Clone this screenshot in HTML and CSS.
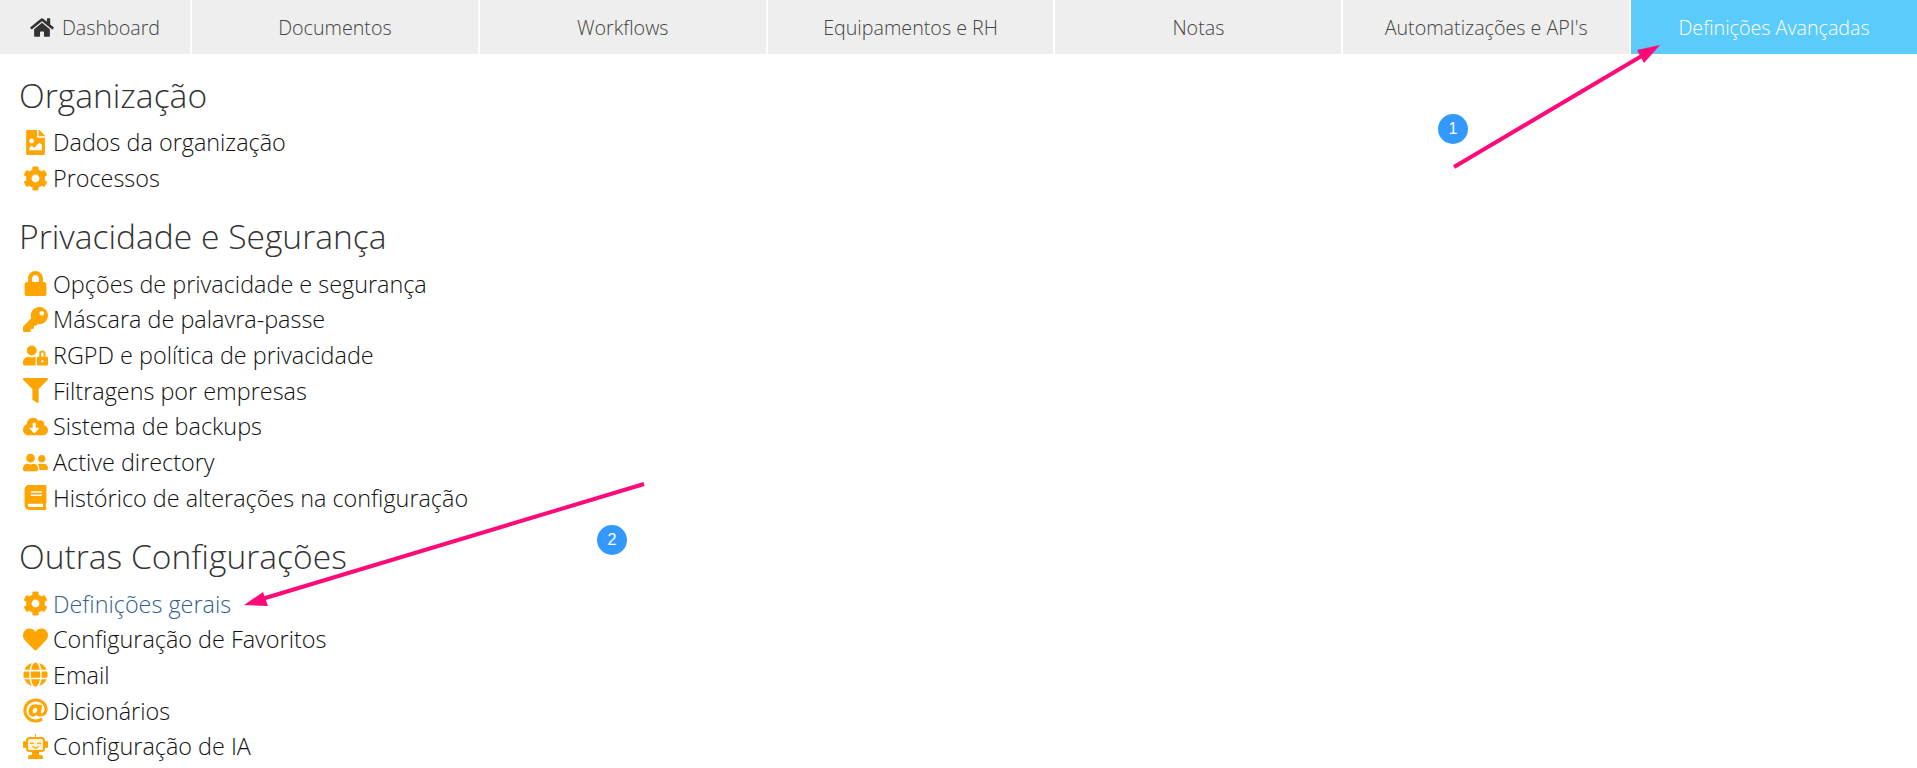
FILE: index.html
```html
<!DOCTYPE html>
<html lang="pt">
  <head>
    <meta charset="UTF-8" />
    <title>Definições Avançadas</title>
    <link rel="stylesheet" href="styles.css">
  </head>
  <body>
    <nav class="tabs">
      <a class="tab tab-home">
        <svg class="home-icon" viewBox="0 0 576 512"><path d="M280.37 148.26L96 300.11V464a16 16 0 0 0 16 16l112.06-.29a16 16 0 0 0 15.92-16V368a16 16 0 0 1 16-16h64a16 16 0 0 1 16 16v95.64a16 16 0 0 0 16 16.05L464 480a16 16 0 0 0 16-16V300L295.67 148.26a12.19 12.19 0 0 0-15.3 0zM571.6 251.47L488 182.56V44.05a12 12 0 0 0-12-12h-56a12 12 0 0 0-12 12v72.61L318.47 43a48 48 0 0 0-61 0L4.34 251.47a12 12 0 0 0-1.6 16.9l25.5 31A12 12 0 0 0 45.15 301l235.22-193.74a12.19 12.19 0 0 1 15.3 0L530.9 301a12 12 0 0 0 16.9-1.6l25.5-31a12 12 0 0 0-1.7-16.93z"/></svg>
        Dashboard
      </a>
      <a class="tab">Documentos</a>
      <a class="tab">Workflows</a>
      <a class="tab">Equipamentos e RH</a>
      <a class="tab">Notas</a>
      <a class="tab">Automatizações e API's</a>
      <a class="tab active">Definições Avançadas</a>
    </nav>

    <main class="content">
      <h2>Organização</h2>
      <ul class="links">
        <li><svg class="icon" viewBox="0 0 384 512"><path d="M384 121.941V128H256V0h6.059a24 24 0 0 1 16.97 7.029l97.941 97.941a24.002 24.002 0 0 1 7.03 16.971zM248 160c-13.2 0-24-10.8-24-24V0H24C10.745 0 0 10.745 0 24v464c0 13.255 10.745 24 24 24h336c13.255 0 24-10.745 24-24V160H248zm-135.455 16c26.51 0 48 21.49 48 48s-21.49 48-48 48-48-21.49-48-48 21.491-48 48-48zm208 240h-256l.485-48.485L104.545 328c4.686-4.686 11.799-4.201 16.485.485L160.545 368 264.06 264.485c4.686-4.686 12.284-4.686 16.971 0L320.545 304v112z"/></svg>Dados da organização</li>
        <li><svg class="icon" viewBox="0 0 512 512"><path id="cog" d="M487.4 315.7l-42.6-24.6c4.3-23.2 4.3-47 0-70.2l42.6-24.6c4.9-2.8 7.1-8.6 5.5-14-11.1-35.6-30-67.8-54.7-94.6-3.8-4.1-10-5.1-14.8-2.3L380.8 110c-17.9-15.4-38.5-27.3-60.8-35.1V25.8c0-5.6-3.9-10.5-9.4-11.7-36.7-8.2-74.3-7.8-109.2 0-5.5 1.2-9.4 6.1-9.4 11.7V75c-22.2 7.9-42.8 19.8-60.8 35.1L88.7 85.5c-4.9-2.8-11-1.9-14.8 2.3-24.7 26.7-43.6 58.9-54.7 94.6-1.7 5.4.6 11.2 5.5 14L67.3 221c-4.3 23.2-4.3 47 0 70.2l-42.6 24.6c-4.9 2.8-7.1 8.6-5.5 14 11.1 35.6 30 67.8 54.7 94.6 3.8 4.1 10 5.1 14.8 2.3l42.6-24.6c17.9 15.4 38.5 27.3 60.8 35.1v49.2c0 5.6 3.9 10.5 9.4 11.7 36.7 8.2 74.3 7.8 109.2 0 5.5-1.2 9.4-6.1 9.4-11.7v-49.2c22.2-7.9 42.8-19.8 60.8-35.1l42.6 24.6c4.9 2.8 11 1.9 14.8-2.3 24.7-26.7 43.6-58.9 54.7-94.6 1.5-5.5-.7-11.3-5.6-14.1zM256 336c-44.1 0-80-35.9-80-80s35.9-80 80-80 80 35.9 80 80-35.9 80-80 80z"/></svg>Processos</li>
      </ul>

      <h2>Privacidade e Segurança</h2>
      <ul class="links">
        <li><svg class="icon" viewBox="0 0 448 512"><path d="M400 224h-24v-72C376 68.2 307.8 0 224 0S72 68.2 72 152v72H48c-26.5 0-48 21.5-48 48v192c0 26.5 21.5 48 48 48h352c26.5 0 48-21.5 48-48V272c0-26.5-21.5-48-48-48zm-104 0H152v-72c0-39.7 32.3-72 72-72s72 32.3 72 72v72z"/></svg>Opções de privacidade e segurança</li>
        <li><svg class="icon" viewBox="0 0 512 512"><path d="M512 176.001C512 273.203 433.202 352 336 352c-11.22 0-22.19-1.062-32.827-3.069l-24.012 27.014A23.999 23.999 0 0 1 261.223 384H224v40c0 13.255-10.745 24-24 24h-40v40c0 13.255-10.745 24-24 24H24c-13.255 0-24-10.745-24-24v-78.059c0-6.365 2.529-12.47 7.029-16.971l161.802-161.802C163.108 213.814 160 195.271 160 176 160 78.798 238.797.001 335.999 0 433.488-.001 512 78.511 512 176.001zM336 128c0 26.51 21.49 48 48 48s48-21.49 48-48-21.49-48-48-48-48 21.49-48 48z"/></svg>Máscara de palavra-passe</li>
        <li><svg class="icon" viewBox="0 0 640 512"><path d="M224 256A128 128 0 1 0 96 128a128 128 0 0 0 128 128zm96 64a63.08 63.08 0 0 1 8.1-30.5c-4.8-.5-9.5-1.5-14.5-1.5h-16.7a174.08 174.08 0 0 1-145.8 0h-16.7A134.43 134.43 0 0 0 0 422.4V464a48 48 0 0 0 48 48h280.9a63.54 63.54 0 0 1-8.9-32zm288-32h-32v-80a80 80 0 0 0-160 0v80h-32a32 32 0 0 0-32 32v160a32 32 0 0 0 32 32h224a32 32 0 0 0 32-32V320a32 32 0 0 0-32-32zM496 432a32 32 0 1 1 32-32 32 32 0 0 1-32 32zm32-144h-64v-80a32 32 0 0 1 64 0z"/></svg>RGPD e política de privacidade</li>
        <li><svg class="icon" viewBox="0 0 512 512"><path d="M487.976 0H24.028C2.71 0-8.047 25.866 7.058 40.971L192 225.941V432c0 7.831 3.821 15.17 10.237 19.662l80 55.98C298.02 518.69 320 507.493 320 487.98V225.941l184.947-184.97C520.021 25.896 509.338 0 487.976 0z"/></svg>Filtragens por empresas</li>
        <li><svg class="icon" viewBox="0 0 640 512"><path d="M537.6 226.6c4.1-10.7 6.4-22.4 6.4-34.6 0-53-43-96-96-96-19.7 0-38.1 6-53.3 16.2C367 64.2 315.3 32 256 32c-88.4 0-160 71.6-160 160 0 2.7.1 5.4.2 8.1C40.2 219.8 0 273.2 0 336c0 79.5 64.5 144 144 144h368c70.7 0 128-57.3 128-128 0-61.9-44-113.6-102.4-125.4zm-132.9 88.7L299.3 420.7c-6.2 6.2-16.4 6.2-22.6 0L171.3 315.3c-10.1-10.1-2.9-27.3 11.3-27.3H248V176c0-8.8 7.2-16 16-16h48c8.8 0 16 7.2 16 16v112h65.4c14.2 0 21.4 17.2 11.3 27.3z"/></svg>Sistema de backups</li>
        <li><svg class="icon" viewBox="0 0 640 512"><path d="M192 256c61.9 0 112-50.1 112-112S253.9 32 192 32 80 82.1 80 144s50.1 112 112 112zm76.8 32h-8.3c-20.8 10-43.9 16-68.5 16s-47.6-6-68.5-16h-8.3C51.6 288 0 339.6 0 403.2V432c0 26.5 21.5 48 48 48h288c26.5 0 48-21.5 48-48v-28.8c0-63.6-51.6-115.2-115.2-115.2zM480 256c53 0 96-43 96-96s-43-96-96-96-96 43-96 96 43 96 96 96zm48 32h-3.8c-13.9 4.8-28.6 8-44.2 8s-30.3-3.2-44.2-8H432c-20.4 0-39.2 5.9-55.7 15.4 24.4 26.3 39.7 61.2 39.7 99.8v38.4c0 2.2-.5 4.3-.6 6.4H592c26.5 0 48-21.5 48-48 0-61.9-50.1-112-112-112z"/></svg>Active directory</li>
        <li><svg class="icon" viewBox="0 0 448 512"><path d="M448 360V24c0-13.3-10.7-24-24-24H96C43 0 0 43 0 96v320c0 53 43 96 96 96h328c13.3 0 24-10.7 24-24v-16c0-7.5-3.5-14.3-8.9-18.7-4.2-15.4-4.2-59.3 0-74.7 5.4-4.3 8.9-11.1 8.9-18.6zM128 134c0-3.3 2.7-6 6-6h212c3.3 0 6 2.7 6 6v20c0 3.3-2.7 6-6 6H134c-3.3 0-6-2.7-6-6v-20zm0 64c0-3.3 2.7-6 6-6h212c3.3 0 6 2.7 6 6v20c0 3.3-2.7 6-6 6H134c-3.3 0-6-2.7-6-6v-20zm253.4 250H96c-17.7 0-32-14.3-32-32 0-17.6 14.4-32 32-32h285.4c-1.9 17.1-1.9 46.9 0 64z"/></svg>Histórico de alterações na configuração</li>
      </ul>

      <h2>Outras Configurações</h2>
      <ul class="links">
        <li class="current"><svg class="icon" viewBox="0 0 512 512"><use href="#cog"/></svg>Definições gerais</li>
        <li><svg class="icon" viewBox="0 0 512 512"><path d="M462.3 62.6C407.5 15.9 326 24.3 275.7 76.2L256 96.5l-19.7-20.3C186.1 24.3 104.5 15.9 49.7 62.6c-62.8 53.6-66.1 149.8-9.9 207.9l193.5 199.8c12.5 12.9 32.8 12.9 45.3 0l193.5-199.8c56.3-58.1 53-154.3-9.8-207.9z"/></svg>Configuração de Favoritos</li>
        <li><svg class="icon" viewBox="0 0 496 512"><path d="M336.5 160C322 70.7 287.8 8 248 8s-74 62.7-88.5 152h177zM152 256c0 22.2 1.2 43.5 3.3 64h185.3c2.1-20.5 3.3-41.8 3.3-64s-1.2-43.5-3.3-64H155.3c-2.1 20.5-3.3 41.8-3.3 64zm324.7-96c-28.6-67.9-86.5-120.4-158-141.6 24.4 33.8 41.2 84.7 50 141.6h108zM177.2 18.4C105.8 39.6 47.8 92.1 19.3 160h108c8.7-56.9 25.5-107.8 49.9-141.6zM487.4 192H372.7c2.1 21 3.3 42.5 3.3 64s-1.2 43-3.3 64h114.6c5.5-20.5 8.6-41.8 8.6-64s-3.1-43.5-8.5-64zM120 256c0-21.5 1.2-43 3.3-64H8.6C3.2 212.5 0 233.8 0 256s3.2 43.5 8.6 64h114.6c-2-21-3.2-42.5-3.2-64zm39.5 96c14.5 89.3 48.7 152 88.5 152s74-62.7 88.5-152h-177zm159.3 141.6c71.4-21.2 129.4-73.7 158-141.6h-108c-8.8 56.9-25.6 107.8-50 141.6zM19.3 352c28.6 67.9 86.5 120.4 158 141.6-24.4-33.8-41.2-84.7-50-141.6h-108z"/></svg>Email</li>
        <li><svg class="icon" viewBox="0 0 512 512"><path d="M256 8C118.941 8 8 118.919 8 256c0 137.059 110.919 248 248 248 48.154 0 95.342-14.14 135.408-40.223 12.005-7.815 14.625-24.288 5.552-35.372l-10.177-12.433c-7.671-9.371-21.179-11.667-31.373-5.129C325.92 429.757 291.314 440 256 440c-101.458 0-184-82.542-184-184S154.542 72 256 72c100.139 0 184 57.619 184 160 0 38.786-21.093 79.742-58.17 83.693-17.349-.454-16.91-12.857-13.476-30.024l23.433-121.11C394.653 149.75 383.308 136 368.225 136h-44.981a13.518 13.518 0 0 0-13.432 11.993l-.01.092c-14.697-17.901-40.448-21.775-59.971-21.775-74.58 0-137.831 62.234-137.831 151.46 0 65.303 36.785 105.87 96 105.87 26.984 0 57.369-15.637 74.991-38.333 9.522 34.104 40.613 34.103 70.71 34.103C462.609 379.41 504 307.798 504 232 504 95.653 394.023 8 256 8zm-21.68 304.43c-22.249 0-36.07-15.623-36.07-40.771 0-44.993 30.779-72.729 58.63-72.729 22.292 0 35.601 15.241 35.601 40.77 0 45.061-33.875 72.73-58.161 72.73z"/></svg>Dicionários</li>
        <li><svg class="icon" viewBox="0 0 25 25">
          <rect x="12" y="0" width="1" height="3"/>
          <rect x="3" y="3" width="19" height="15" rx="3.500"/>
          <rect x="5" y="5" width="15" height="11" rx="1.500" fill="#fff3dc"/>
          <path d="M7.200 10a1.800 1.800 0 0 1 3.400 0M14.400 10a1.800 1.800 0 0 1 3.400 0M9.500 12.300a3.400 3.400 0 0 0 6 0" fill="none" stroke="#ffa500" stroke-width="1.300"/>
          <rect x="0" y="7" width="3" height="7" rx="1.200"/>
          <rect x="22" y="7" width="3" height="7" rx="1.200"/>
          <path d="M9 18h7v3H9zM7 21h11a2 2 0 0 1 2 2v2H5v-2a2 2 0 0 1 2-2z"/>
        </svg>Configuração de IA</li>
      </ul>
    </main>

    <!-- setas e numeros por cima da pagina -->
    <svg class="marks" viewBox="0 0 1917 768">
      <line x1="1454" y1="167" x2="1645" y2="54"/>
      <polygon points="1660,45 1637,50 1644,63"/>
      <line x1="644" y1="484" x2="262" y2="599"/>
      <polygon points="244,605 263,592 268,606"/>
    </svg>
    <span class="badge badge-one">1</span>
    <span class="badge badge-two">2</span>
  </body>
</html>
```

FILE: styles.css
```css
body {
  margin: 0;
  background-color: white;
  font-family: "Open Sans", sans-serif;
  font-weight: 300;
  overflow: hidden;
}
.tabs {
  display: flex;
  gap: 2px;
  height: 54px;
}
.tab {
  flex: 1;
  display: flex;
  align-items: center;
  justify-content: center;
  gap: 8px;
  background-color: #eeeeee;
  color: #444;
  font-size: 19.7px;
  white-space: nowrap;
}
.tab-home {
  flex: 0 0 190px;
}
.tab.active {
  background-color: #5bcbf9;
  color: white;
}
.home-icon {
  width: 24px;
  height: 21px;
  fill: #333;
}
.content {
  padding: 21px 19px 0 20px;
}
h2 {
  margin: 0 0 9.5px -1px;
  font-size: 33.6px;
  font-weight: 300;
  line-height: 40px;
  color: #333;
}
.links {
  list-style: none;
  margin: 0 0 20.5px;
  padding: 0 0 0 3px;
}
.links li {
  display: flex;
  align-items: center;
  gap: 5px;
  height: 35.7px;
  font-size: 23.4px;
  color: #111;
  white-space: nowrap;
}
.links li.current {
  color: #355f8c;
}
.icon {
  width: 25px;
  height: 25px;
  fill: orange;
  flex: none;
}
.marks {
  position: absolute;
  left: 0;
  top: 0;
  width: 1917px;
  height: 768px;
  pointer-events: none;
}
.marks line {
  stroke: #ff0a78;
  stroke-width: 4;
}
.marks polygon {
  fill: #ff0a78;
}
.badge {
  position: absolute;
  width: 30px;
  height: 30px;
  border-radius: 50%;
  background-color: #3399ff;
  color: white;
  font-family: "Liberation Sans", sans-serif;
  font-weight: 400;
  font-size: 16px;
  line-height: 30px;
  text-align: center;
}
.badge-one {
  left: 1438px;
  top: 114px;
}
.badge-two {
  left: 597px;
  top: 525px;
}
```
